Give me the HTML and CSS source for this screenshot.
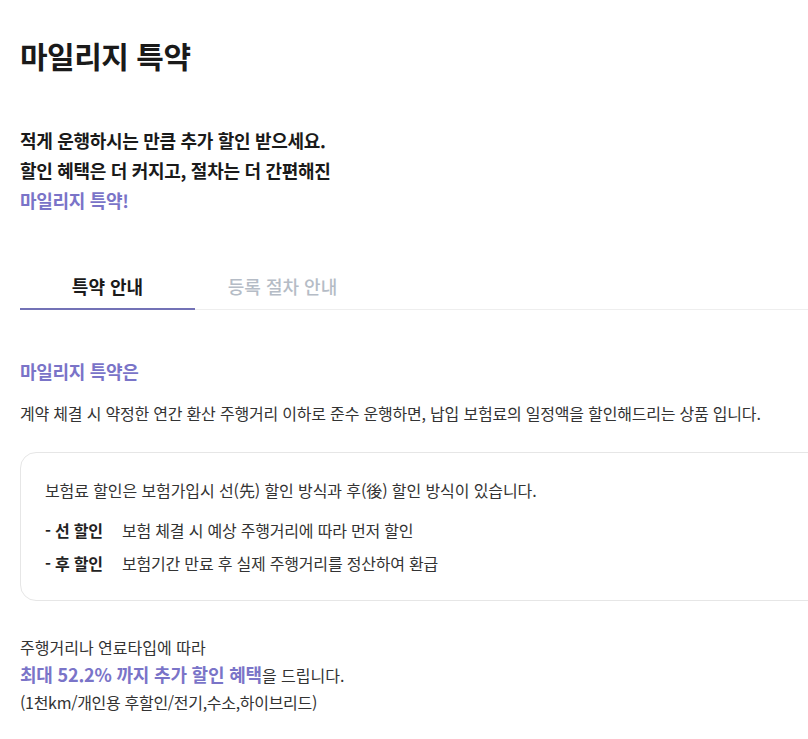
FILE: index.html
```html
<!DOCTYPE html>
<html lang="ko">
<head>
<meta charset="utf-8">
<title>마일리지 특약</title>
<link rel="stylesheet" href="styles.css">
</head>
<body>
<main class="page">
  <h1 class="title">마일리지 특약</h1>
  <p class="lead">
    적게 운행하시는 만큼 추가 할인 받으세요.<br>
    할인 혜택은 더 커지고, 절차는 더 간편해진<br>
    <span class="accent">마일리지 특약!</span>
  </p>
  <nav class="tabs">
    <a class="tab active">특약 안내</a>
    <a class="tab">등록 절차 안내</a>
  </nav>
  <h2 class="section-title">마일리지 특약은</h2>
  <p class="desc">계약 체결 시 약정한 연간 환산 주행거리 이하로 준수 운행하면, 납입 보험료의 일정액을 할인해드리는 상품 입니다.</p>
  <div class="box">
    <p class="box-intro">보험료 할인은 보험가입시 선(先) 할인 방식과 후(後) 할인 방식이 있습니다.</p>
    <ul class="box-list">
      <li><strong>- 선 할인</strong><span>보험 체결 시 예상 주행거리에 따라 먼저 할인</span></li>
      <li><strong>- 후 할인</strong><span>보험기간 만료 후 실제 주행거리를 정산하여 환급</span></li>
    </ul>
  </div>
  <p class="note">
    주행거리나 연료타입에 따라<br>
    <span class="note-strong">최대 52.2% 까지 추가 할인 혜택</span>을 드립니다.<br>
    <span class="note-small">(1천km/개인용 후할인/전기,수소,하이브리드)</span>
  </p>
</main>
</body>
</html>
```

FILE: styles.css
```css
html, body {
  margin: 0;
  padding: 0;
  overflow: hidden;
  background: #fff;
}
body {
  font-family: "Noto Sans CJK KR", "Noto Sans", sans-serif;
  color: #222;
}
.page {
  width: 1000px;
  padding: 33px 0 0 20px;
}
.title {
  margin: 0;
  font-size: 30px;
  font-weight: 700;
  line-height: 44px;
  color: #1a1a1a;
  letter-spacing: -0.5px;
}
.lead {
  margin: 48px 0 0;
  font-size: 18px;
  font-weight: 700;
  line-height: 30px;
  color: #1a1a1a;
  letter-spacing: -0.3px;
}
.accent {
  color: #7a74c8;
}
.tabs {
  display: flex;
  margin-top: 54px;
  border-bottom: 1px solid #eeeeee;
}
.tab {
  width: 175px;
  text-align: center;
  font-size: 18px;
  line-height: 26px;
  padding: 4px 0 9px;
  color: #b5bcc6;
  font-weight: 500;
  border-bottom: 2px solid transparent;
  margin-bottom: -1px;
}
.tab.active {
  color: #1a1a1a;
  font-weight: 700;
  border-bottom-color: #7372b6;
}
.section-title {
  margin: 47px 0 0;
  font-size: 18px;
  font-weight: 700;
  line-height: 28px;
  color: #7a74c8;
  letter-spacing: -0.3px;
}
.desc {
  margin: 16px 0 0;
  font-size: 16px;
  line-height: 24px;
  color: #333;
  letter-spacing: -0.2px;
}
.box {
  margin-top: 27px;
  border: 1px solid #e6e6e6;
  border-radius: 16px;
  padding: 25px 24px 25px;
  width: 900px;
}
.box-intro {
  margin: 0;
  font-size: 16px;
  line-height: 24px;
  color: #333;
  letter-spacing: -0.1px;
}
.box-list {
  list-style: none;
  margin: 16px 0 0;
  padding: 0;
  display: flex;
  flex-direction: column;
  gap: 9px;
}
.box-list li {
  display: flex;
  font-size: 16px;
  line-height: 24px;
  color: #333;
  letter-spacing: -0.2px;
}
.box-list strong {
  width: 77px;
  font-weight: 700;
  color: #222;
}
.note {
  margin: 33px 0 0;
  font-size: 16px;
  line-height: 27px;
  color: #333;
}
.note-strong {
  color: #7a74c8;
  font-weight: 700;
  font-size: 18px;
  letter-spacing: -0.2px;
}
.note-small {
  letter-spacing: -0.3px;
}
```
